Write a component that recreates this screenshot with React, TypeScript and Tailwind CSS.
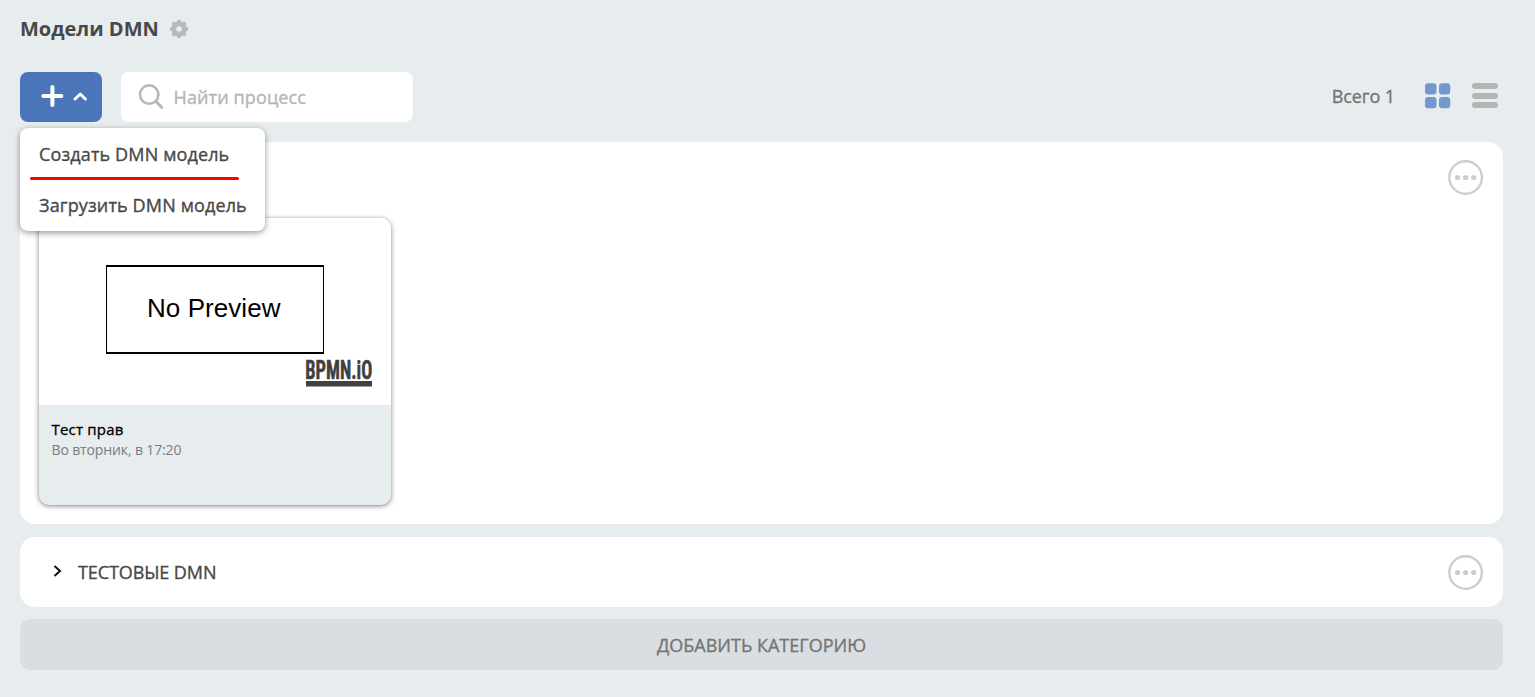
import React from "react";

function Gear() {
  return (
    <svg width="18" height="18" viewBox="-9 -9 18 18" fill="#b8b8b8">
      {[0, 45, 90, 135].map((a) => (
        <path key={a} d="M-2.8 -6L-1.5 -9H1.5L2.8 -6V6L1.5 9H-1.5L-2.8 6Z" transform={`rotate(${a})`} />
      ))}
      <circle r="5" fill="none" stroke="#b8b8b8" strokeWidth="4.4" />
      <circle r="2.8" fill="#e7ecef" />
    </svg>
  );
}

function MoreButton() {
  return (
    <button className="h-9 w-9 shrink-0">
      <svg width="36" height="36" viewBox="0 0 36 36" fill="#cdcdcd">
        <circle cx="17.6" cy="17.5" r="16.3" fill="none" stroke="#cdcdcd" strokeWidth="2.4" />
        <circle cx="9.5" cy="17.5" r="2.6" />
        <circle cx="17.6" cy="17.5" r="2.6" />
        <circle cx="25.7" cy="17.5" r="2.6" />
      </svg>
    </button>
  );
}

function CreateMenu() {
  return (
    <div className="absolute top-14 left-0 z-10 h-[103px] w-[245px] rounded-lg bg-white pl-[19px] text-lg font-medium tracking-[0.14px] whitespace-nowrap text-[#484848] shadow-[0_2px_6px_rgba(0,0,0,0.4)] [-webkit-text-stroke:0.35px_#484848]">
      <div className="h-[51px] leading-[53px]">Создать DMN модель</div>
      <div className="h-[51px] leading-[53px]">Загрузить DMN модель</div>
      <div className="absolute top-[49px] left-[10px] h-[3px] w-[209px] rounded-full bg-[#ff0000]" />
    </div>
  );
}

function ModelCard() {
  return (
    <div className="h-[287px] w-[352px] overflow-hidden rounded-[10px] bg-[#e7ecef] shadow-[0_1px_5px_rgba(0,0,0,0.5)]">
      <div className="h-[187px] bg-white">
        <svg width="352" height="187" viewBox="0 0 352 187">
          <path d="M67 48H285M67 135H285" stroke="#000" strokeWidth="2" />
          <path d="M67.5 47V136M284.5 47V136" stroke="#000" strokeWidth="1" />
          <text x="108" y="99" fontSize="26" textLength="133.5" fontFamily="Liberation Sans, sans-serif">No Preview</text>
          <text x="266.3" y="161" fontSize="26" fontWeight="700" textLength="67" lengthAdjust="spacingAndGlyphs" fill="#404040" stroke="#404040" strokeWidth="0.5" fontFamily="Roboto, sans-serif" className="[font-stretch:75%]">BPMN.iO</text>
          <rect x="267" y="163" width="66" height="5.5" fill="#404040" />
        </svg>
      </div>
      <div className="px-[12.5px] pt-[14px]">
        <div className="text-[15px] leading-5 font-medium tracking-[0.2px] text-black [-webkit-text-stroke:0.3px_black]">Тест прав</div>
        <div className="pt-px text-sm leading-5 tracking-[-0.13px] text-[#7c7c7c]">Во вторник, в 17:20</div>
      </div>
    </div>
  );
}

export default function App() {
  return (
    <div className="flex h-[697px] w-full flex-col bg-[#e7ecef] pr-8 pl-5 font-['Open_Sans','Noto_Sans',sans-serif]">
      <header className="flex h-[72px] items-start gap-[11px] pt-[15px]">
        <h1 className="text-xl leading-7 font-bold text-[#484848]">Модели DMN</h1>
        <button className="mt-[5px]"><Gear /></button>
      </header>

      <div className="flex h-[50px] items-center">
        <div className="relative h-[50px] w-[82px]">
          <button className="h-full w-full rounded-lg bg-[#4b75b9]">
            <svg width="82" height="50" fill="none" stroke="#fff" strokeLinecap="round">
              <path d="M32.4 15V33.1M23.3 24H41.4" strokeWidth="4" />
              <path d="M55 27L60.2 22L65.4 27" strokeWidth="3" strokeLinejoin="round" />
            </svg>
          </button>
          <CreateMenu />
        </div>
        <div className="ml-[19px] flex h-[50px] w-[292px] items-center rounded-lg bg-white">
          <svg className="ml-[17px]" width="26" height="26" viewBox="0 0 26 26" fill="none" stroke="#b8b8b8" strokeWidth="2.6">
            <circle cx="11.2" cy="10.6" r="9.2" />
            <path d="M17.7 17.2L23.7 23.4" strokeWidth="3" strokeLinecap="round" />
          </svg>
          <span className="ml-[9.5px] text-lg font-medium tracking-[0.12px] text-[#b5b5b5] [-webkit-text-stroke:0.35px_#b5b5b5]">Найти процесс</span>
        </div>
        <span className="ml-auto -translate-y-px text-lg font-medium tracking-[-0.08px] text-[#757575] [-webkit-text-stroke:0.35px_#757575]">Всего 1</span>
        <svg className="mb-[3px] ml-[30px]" width="26" height="26" fill="#7397cf">
          <rect x="0" y="0.2" width="11.5" height="11.2" rx="3" />
          <rect x="14" y="0.2" width="11.2" height="11.2" rx="3" />
          <rect x="0" y="14" width="11.5" height="11.2" rx="3" />
          <rect x="14" y="14" width="11.2" height="11.2" rx="3" />
        </svg>
        <svg className="mr-[5px] mb-[3px] ml-[21px]" width="26" height="26" fill="#b5b5b5">
          <rect y="0" width="26" height="6" rx="3" />
          <rect y="10" width="26" height="6" rx="3" />
          <rect y="19" width="26" height="6" rx="3" />
        </svg>
      </div>

      <section className="mt-5 h-[382px] rounded-[15px] bg-white px-[19px]">
        <div className="flex h-[76px] justify-end pt-[18px]"><MoreButton /></div>
        <ModelCard />
      </section>

      <section className="mt-[13px] flex h-[70px] items-center rounded-[15px] bg-white pr-[19px] pl-[33px]">
        <svg width="9" height="14" fill="none" stroke="#111" strokeWidth="2">
          <path d="M1.5 1L7 6L1.5 11" />
        </svg>
        <span className="ml-4 flex-1 text-lg font-medium tracking-[-0.1px] text-[#484848] [-webkit-text-stroke:0.35px_#484848]">ТЕСТОВЫЕ DMN</span>
        <div className="flex pt-[2px]"><MoreButton /></div>
      </section>

      <button className="mt-3 h-[51px] rounded-[10px] bg-[#d9dee2] text-lg font-medium text-[#757575] [-webkit-text-stroke:0.35px_#757575]">ДОБАВИТЬ КАТЕГОРИЮ</button>
    </div>
  );
}
